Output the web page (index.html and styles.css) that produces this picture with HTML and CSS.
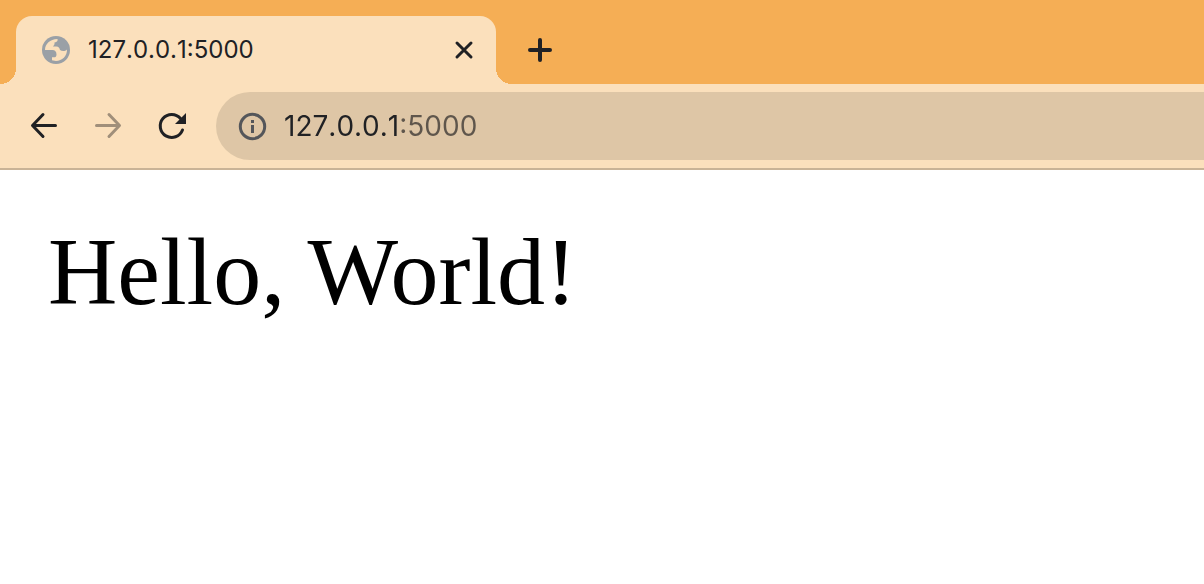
FILE: index.html
```html
<!DOCTYPE html>
<html lang="en">
<head>
<meta charset="utf-8">
<meta name="viewport" content="width=device-width, initial-scale=1">
<title>127.0.0.1:5000</title>
<link rel="stylesheet" href="styles.css">
</head>
<body>
<header class="browser">
  <div class="tab-strip">
    <div class="tab">
      <svg class="favicon" viewBox="0 0 28 28" aria-hidden="true">
        <circle cx="14" cy="14" r="14" fill="#9aa0a6"/>
        <path d="M3 14C3 8 8 3 15.500 3C16 5.800 14 6 12.500 6.500C13 8.500 11.500 9.500 11 10.500H14.500C16.500 10.500 17.500 12 18 14C20 15.500 23 15.500 25 13.500C25.300 20 20 25 14 25L10 24.300V21.300H12C13.500 21.300 14.500 20.500 14.500 18.500C14.500 15.500 13 14 10.500 14Z" fill="#fbe0bc"/>
      </svg>
      <span class="tab-title">127.0.0.1:5000</span>
      <button class="icon-button tab-close" type="button" aria-label="Close tab">
        <svg viewBox="0 0 32 32"><path d="M9 9l14 14M23 9L9 23"/></svg>
      </button>
    </div>
    <button class="icon-button new-tab" type="button" aria-label="New tab">
      <svg viewBox="0 0 32 32"><path d="M16 6v20M6 16h20"/></svg>
    </button>
  </div>
  <div class="toolbar">
    <nav class="navigation" aria-label="Browser navigation">
      <button class="icon-button" type="button" aria-label="Back">
        <svg viewBox="0 0 32 32"><path d="M27.500 15.500H5M15 4.500L4.500 15.500 15 26.500"/></svg>
      </button>
      <button class="icon-button" type="button" aria-label="Forward" disabled>
        <svg viewBox="0 0 32 32"><path d="M4.500 15.500H27M17 4.500L27.500 15.500 17 26.500"/></svg>
      </button>
      <button class="icon-button" type="button" aria-label="Reload">
        <svg viewBox="0 0 32 32"><path d="M26.500 20A11.500 11.500 0 1 1 24.500 8.500"/><path class="solid" d="M30 3v11H19z"/></svg>
      </button>
    </nav>
    <form class="address-bar">
      <button class="icon-button site-info" type="button" aria-label="View site information">
        <svg viewBox="0 0 32 32"><circle cx="16.500" cy="16.500" r="12.200"/><path class="solid" d="M15 10h3v3h-3zM15 15h3v8h-3z"/></svg>
      </button>
      <input class="address" type="text" aria-label="Address" value="127.0.0.1:5000" spellcheck="false">
    </form>
  </div>
</header>
<main class="page">
  <p class="greeting">Hello, World!</p>
</main>
</body>
</html>
```
FILE: styles.css
```css
:root {
  --frame: #f5ae55;
  --toolbar: #fbe0bc;
  --field: #dec6a6;
  --ink: #202124;
  --ink-muted: #5f564c;
}

* {
  box-sizing: border-box;
}

body {
  margin: 0;
  background: #fff;
  font-family: Inter, sans-serif;
  font-kerning: none;
}

.browser {
  background: var(--toolbar);
  border-bottom: 2px solid #c9b396;
  color: var(--ink);
}

.tab-strip {
  display: flex;
  height: 84px;
  padding: 16px 16px 0;
  background: var(--frame);
}

.tab {
  position: relative;
  display: flex;
  align-items: center;
  width: 480px;
  padding: 0 16px 0 26px;
  border-radius: 16px 16px 0 0;
  background: var(--toolbar);
}

.tab::before,
.tab::after {
  content: "";
  position: absolute;
  bottom: 0;
  width: 16px;
  height: 16px;
}

.tab::before {
  right: 100%;
  background: radial-gradient(circle at 0 0, var(--frame) 16px, var(--toolbar) 16px);
}

.tab::after {
  left: 100%;
  background: radial-gradient(circle at 100% 0, var(--frame) 16px, var(--toolbar) 16px);
}

.favicon {
  width: 28px;
  height: 28px;
}

.tab-title {
  flex: 1;
  margin-left: 18px;
  font-size: 24px;
  line-height: 32px;
}

.icon-button {
  flex: none;
  display: block;
  width: 32px;
  height: 32px;
  padding: 0;
  border: 0;
  background: none;
  color: inherit;
}

.icon-button svg {
  display: block;
  width: 32px;
  height: 32px;
  fill: none;
  stroke: currentColor;
  stroke-width: 3;
  stroke-linecap: round;
  stroke-linejoin: round;
}

.icon-button .solid {
  fill: currentColor;
  stroke: none;
}

.icon-button:disabled {
  color: #a08f7a;
}

.new-tab {
  align-self: center;
  margin-left: 28px;
}

.new-tab svg {
  stroke-width: 4;
}

.toolbar {
  display: flex;
  align-items: center;
  padding: 8px 0 8px 28px;
}

.navigation {
  display: flex;
  gap: 32px;
}

.address-bar {
  flex: 1;
  display: flex;
  align-items: center;
  height: 68px;
  margin-left: 28px;
  padding-left: 20px;
  border-radius: 34px 0 0 34px;
  background: var(--field);
}

.site-info {
  color: #54565a;
}

.address {
  flex: 1;
  min-width: 0;
  margin-left: 16px;
  padding: 0;
  border: 0;
  outline: 0;
  background: linear-gradient(to right, var(--ink) 115px, var(--ink-muted) 115px);
  -webkit-background-clip: text;
  background-clip: text;
  color: transparent;
  caret-color: var(--ink);
  font-family: inherit;
  font-kerning: inherit;
  font-size: 28px;
  line-height: 36px;
}

.page {
  padding: 48px;
}

.greeting {
  margin: 0;
  color: #000;
  font-family: "Liberation Serif", "Times New Roman", serif;
  font-kerning: normal;
  font-size: 96px;
  line-height: 108px;
}
```
